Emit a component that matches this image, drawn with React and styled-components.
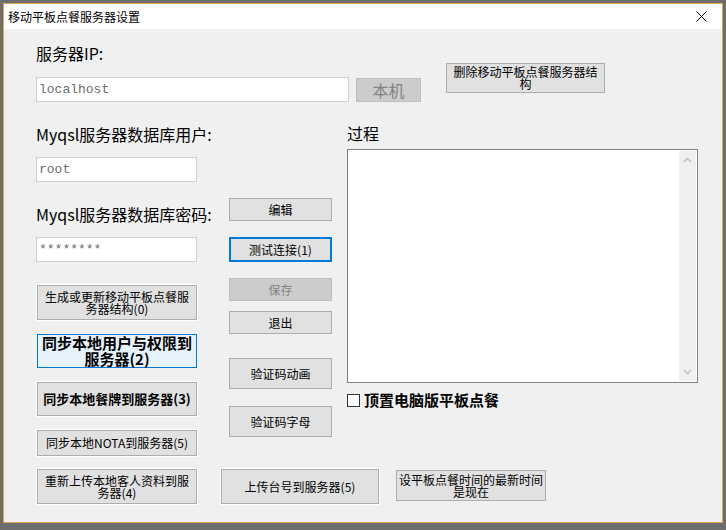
import React from "react";
import styled, {createGlobalStyle, css} from "styled-components";

const GlobalStyle = createGlobalStyle`
  html, body {
    margin: 0;
    padding: 0;
    background: #6e6e6e;
  }
  body {
    font-family: "Noto Sans CJK SC", "Noto Sans", sans-serif;
    color: #000;
  }
`;

const Backdrop = styled.div`
  width: 726px;
  height: 530px;
  padding: 3px;
  box-sizing: border-box;
`;

const Window = styled.div`
  width: 720px;
  height: 520px;
  box-sizing: border-box;
  border: 1px solid #dca34c;
  background: #f0f0f0;
  display: flex;
  flex-direction: column;
`;

const TitleBar = styled.div`
  height: 25px;
  background: #fff;
  display: flex;
  align-items: center;
  justify-content: space-between;
  padding: 0 4px 0 4px;
  font-size: 12px;
  line-height: 14px;
`;

const CloseBox = styled.div`
  width: 30px;
  height: 25px;
  display: flex;
  align-items: center;
  justify-content: center;
  margin-right: 2px;
`;

const Body = styled.div`
  padding-left: 32px;
  display: flex;
  flex-direction: column;
`;

const Row = styled.div`
  display: flex;
  align-items: flex-start;
`;

const Column = styled.div`
  display: flex;
  flex-direction: column;
  align-items: flex-start;
  width: ${p => p.$width}px;
  margin-left: ${p => p.$left || 0}px;
`;

const Label = styled.div`
  font-size: ${p => p.$size || 16}px;
  line-height: 18px;
  white-space: nowrap;
  margin-top: ${p => p.$top || 0}px;
`;

const Field = styled.div`
  box-sizing: border-box;
  width: ${p => p.$width}px;
  height: 25px;
  margin-top: ${p => p.$top || 0}px;
  background: #fff;
  border: 1px solid #cfcfcf;
  color: #6d6d6d;
  font-family: "Liberation Mono", "Noto Sans CJK SC", monospace;
  font-size: 13px;
  line-height: 23px;
  padding-left: 2px;
`;

const Button = styled.div`
  box-sizing: border-box;
  width: ${p => p.$width}px;
  height: ${p => p.$height}px;
  margin-top: ${p => p.$top || 0}px;
  margin-left: ${p => p.$left || 0}px;
  display: flex;
  align-items: center;
  justify-content: center;
  text-align: center;
  background: #e1e1e1;
  border: 1px solid #adadad;
  font-size: ${p => p.$size || 12}px;
  line-height: ${p => p.$line || 12}px;
  padding: 0 ${p => p.$pad ?? 5}px;
  white-space: ${p => p.$wrap ? "normal" : "nowrap"};
  ${p => p.$bold && css`font-weight: 700;`}
  ${p => p.$outlined && css`box-shadow: 0 0 0 1px #fff;`}
  ${p => p.$focused && css`border: 2px solid #0078d7;`}
  ${p => p.$hover && css`
    background: #e5f1fb;
    border-color: #0078d7;
  `}
  ${p => p.$disabled && css`
    background: #cccccc;
    border-color: #bfbfbf;
    color: #838383;
  `}
`;

const LogPanel = styled.div`
  box-sizing: border-box;
  width: 351px;
  height: 234px;
  margin-top: 7px;
  background: #fff;
  border: 1px solid #828282;
  display: flex;
  justify-content: flex-end;
  padding: 1px;
`;

const ScrollTrack = styled.div`
  width: 17px;
  background: #f0f0f0;
  display: flex;
  flex-direction: column;
  justify-content: space-between;
  align-items: center;
  padding: 6px 0;
`;

const CheckRow = styled.div`
  display: flex;
  align-items: center;
  margin-top: 9px;
  font-size: 15px;
  font-weight: 700;
  line-height: 16px;
`;

const CheckBox = styled.div`
  width: 13px;
  height: 13px;
  box-sizing: border-box;
  border: 1px solid #333;
  background: #fff;
  margin-right: 4px;
`;

const Chevron = ({down}) => (
    <svg width="9" height="6" viewBox="0 0 9 6">
        <path d={down ? "M1 1 L4.5 4.5 L8 1" : "M1 5 L4.5 1.5 L8 5"} fill="none" stroke="#c4c4c4" strokeWidth="1.6"/>
    </svg>
)

const App = () => {
    return (
        <Backdrop>
            <GlobalStyle/>
            <Window>
                <TitleBar>
                    <span>移动平板点餐服务器设置</span>
                    <CloseBox>
                        <svg width="11" height="11" viewBox="0 0 11 11">
                            <path d="M0.5 0.5 L10.5 10.5 M10.5 0.5 L0.5 10.5" stroke="#000" strokeWidth="1"/>
                        </svg>
                    </CloseBox>
                </TitleBar>
                <Body>
                    <Row>
                        <Column>
                            <Label $top={15}>服务器IP:</Label>
                            <Row>
                                <Field $width={313} $top={15}>localhost</Field>
                                <Button $width={65} $height={24} $top={16} $left={7} $size={16} $line={18} $disabled>本机</Button>
                            </Row>
                        </Column>
                        <Button $width={159} $height={30} $top={34} $left={25} $wrap>删除移动平板点餐服务器结构</Button>
                    </Row>
                    <Row>
                        <Column $width={161}>
                            <Label $top={23}>Myqsl服务器数据库用户:</Label>
                            <Field $width={161} $top={14}>root</Field>
                            <Label $top={23}>Myqsl服务器数据库密码:</Label>
                            <Field $width={161} $top={14}>********</Field>
                            <Button $width={160} $height={35} $top={23} $left={1} $outlined $wrap>生成或更新移动平板点餐服务器结构(0)</Button>
                            <Button $width={160} $height={34} $top={14} $left={1} $size={15} $line={16} $pad={2} $bold $hover $wrap>同步本地用户与权限到服务器(2)</Button>
                            <Button $width={160} $height={34} $top={14} $left={1} $size={13} $line={14} $bold $outlined>同步本地餐牌到服务器(3)</Button>
                            <Button $width={160} $height={26} $top={14} $left={1} $outlined>同步本地NOTA到服务器(5)</Button>
                        </Column>
                        <Column $width={103} $left={32}>
                            <Button $width={103} $height={23} $top={96}>编辑</Button>
                            <Button $width={103} $height={25} $top={16} $focused>测试连接(1)</Button>
                            <Button $width={103} $height={23} $top={16} $disabled>保存</Button>
                            <Button $width={103} $height={23} $top={10}>退出</Button>
                            <Button $width={103} $height={31} $top={24}>验证码动画</Button>
                            <Button $width={103} $height={31} $top={17}>验证码字母</Button>
                        </Column>
                        <Column $width={351} $left={15}>
                            <Label $top={22}>过程</Label>
                            <LogPanel>
                                <ScrollTrack>
                                    <Chevron/>
                                    <Chevron down/>
                                </ScrollTrack>
                            </LogPanel>
                            <CheckRow>
                                <CheckBox/>
                                顶置电脑版平板点餐
                            </CheckRow>
                        </Column>
                    </Row>
                    <Row>
                        <Button $width={160} $height={35} $top={13} $left={1} $outlined $wrap>重新上传本地客人资料到服务器(4)</Button>
                        <Button $width={158} $height={35} $top={13} $left={24} $outlined>上传台号到服务器(5)</Button>
                        <Button $width={150} $height={31} $top={14} $left={17} $pad={0} $wrap>设平板点餐时间的最新时间是现在</Button>
                    </Row>
                </Body>
            </Window>
        </Backdrop>
    )
}

export default App;
